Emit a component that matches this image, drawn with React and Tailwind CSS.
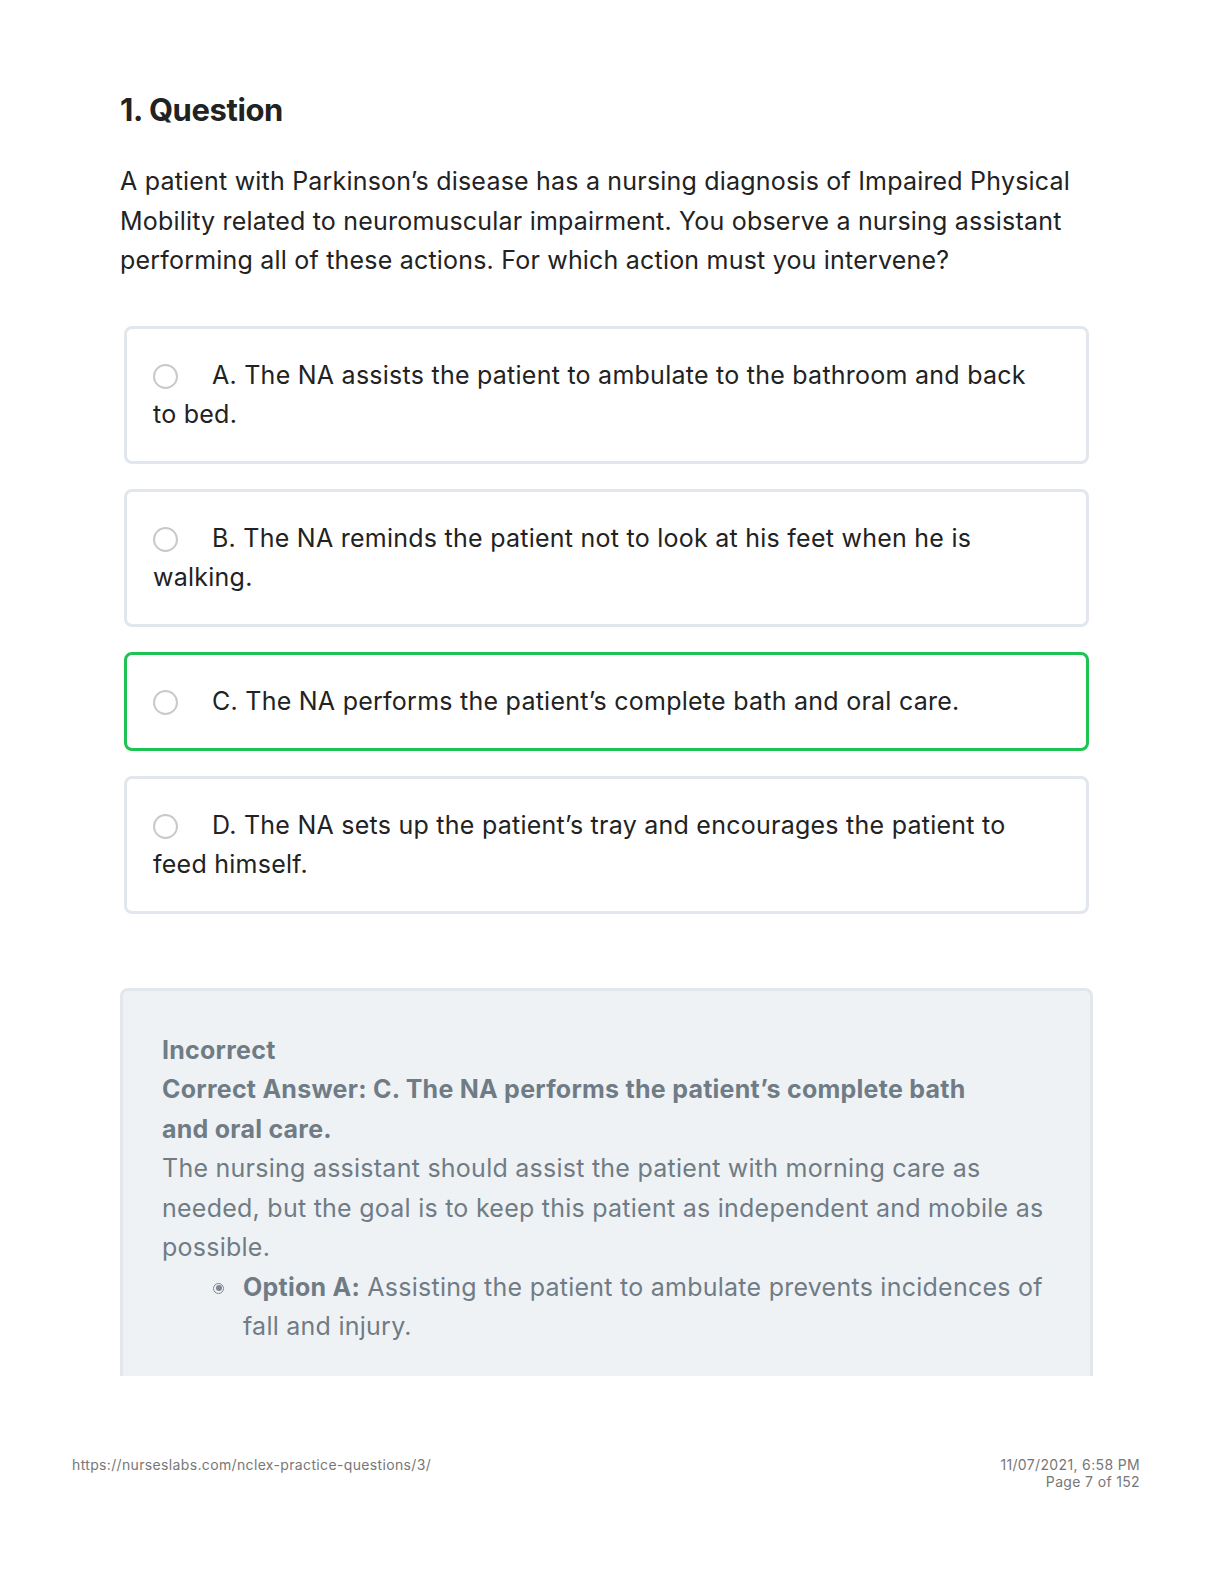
const options = [
  { id: 'A', text: 'A. The NA assists the patient to ambulate to the bathroom and back to bed.' },
  { id: 'B', text: 'B. The NA reminds the patient not to look at his feet when he is walking.' },
  { id: 'C', text: 'C. The NA performs the patient’s complete bath and oral care.', correct: true },
  { id: 'D', text: 'D. The NA sets up the patient’s tray and encourages the patient to feed himself.' },
];

const Radio = () => (
  <span className="inline-block w-[25px] h-[25px] rounded-full border-2 border-[#c9c9c9] bg-white align-[-5px] mr-[34px]"></span>
);

export default function App() {
  return (
    <div className="w-[1224px] h-[1584px] overflow-hidden bg-white font-['Inter','Noto_Sans',sans-serif] text-[#222]">
      <div className="pl-[120px] pr-[131px] pt-[88px]">
        <h2 className="text-[31px] leading-[44px] font-bold tracking-[-0.4px]">1. Question</h2>

        <p className="mt-[30px] text-[25px] leading-[39.5px] tracking-[0.2px]">
          A patient with Parkinson’s disease has a nursing diagnosis of Impaired Physical Mobility related to neuromuscular impairment. You observe a nursing assistant performing all of these actions. For which action must you intervene?
        </p>

        <div className="mt-[45px] mx-[4px] flex flex-col gap-[25px]">
          {options.map((o) => (
            <div
              key={o.id}
              className={`rounded-[8px] border-[3px] pl-[26px] pr-[40px] py-[27px] text-[25px] leading-[39px] tracking-[0.25px] ${
                o.correct ? 'border-[#1dc451]' : 'border-[#e2e7ed]'
              }`}
            >
              <Radio />
              {o.text}
            </div>
          ))}
        </div>
      </div>

      <div className="mt-[74px] ml-[120px] w-[973px] h-[388px] overflow-hidden rounded-t-[8px] border-x-[3px] border-t-[3px] border-[#e2e7ed] bg-[#eff2f5] px-[39px] pt-[40px] text-[25px] leading-[39.5px] text-[#6f7c86] tracking-[0.25px]">
        <p className="font-bold">Incorrect</p>
        <p className="font-bold pr-[60px]">Correct Answer: C. The NA performs the patient’s complete bath and oral care.</p>
        <p>The nursing assistant should assist the patient with morning care as needed, but the goal is to keep this patient as independent and mobile as possible.</p>
        <ul className="pl-[81px]">
          <li className="relative">
            <span className="absolute left-[-30px] top-[15px] w-[11px] h-[11px] rounded-full border-[1.5px] border-[#7d8891] flex items-center justify-center">
              <span className="w-[6px] h-[6px] rounded-full bg-[#7d8891]"></span>
            </span>
            <span className="font-bold">Option A:</span> Assisting the patient to ambulate prevents incidences of fall and injury.
          </li>
        </ul>
      </div>

      <div className="flex justify-between pl-[72px] pr-[84px] pt-[80px] text-[14px] leading-[17px] text-[#777] tracking-[0.35px]">
        <span>https://nurseslabs.com/nclex-practice-questions/3/</span>
        <div className="text-right">
          <div>11/07/2021, 6:58 PM</div>
          <div>Page 7 of 152</div>
        </div>
      </div>
    </div>
  );
}
